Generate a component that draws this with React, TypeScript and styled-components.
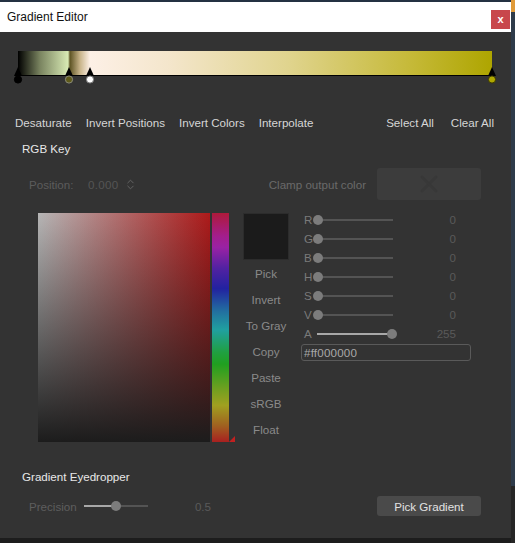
import React from "react";
import styled, { createGlobalStyle } from "styled-components";
import { ChevronsUpDown, X } from "lucide-react";

const GlobalStyle = createGlobalStyle`
  html, body {
    margin: 0;
    padding: 0;
    background: #1d1d1d;
  }
  body {
    font-family: "Liberation Sans", Arial, sans-serif;
    font-size: 11.6px;
  }
`;

const Desktop = styled.div`
  width: 515px;
  height: 543px;
  display: flex;
  background: linear-gradient(#243142 0 2px, #1d1d1d 2px);
  overflow: hidden;
`;

const Window = styled.div`
  width: 511px;
  height: 536px;
  margin-top: 2px;
  display: flex;
  flex-direction: column;
  flex-shrink: 0;
`;

const RightStrip = styled.div`
  flex: 1;
  background: linear-gradient(#e09a38 0 12px, #2e3b4a 12px 486px, #262626 486px);
`;

const TitleBar = styled.div`
  height: 30px;
  background: #ffffff;
  display: flex;
  align-items: center;
  justify-content: space-between;
  padding: 0 1px 0 7px;
`;

const Title = styled.span`
  font-size: 12px;
  color: #111;
`;

const CloseButton = styled.div`
  width: 19px;
  height: 19px;
  margin-top: 4px;
  background: #c8474c;
  color: #fff;
  font-weight: bold;
  font-size: 11px;
  display: flex;
  align-items: center;
  justify-content: center;
`;

const Body = styled.div`
  flex: 1;
  background: #333333;
  display: flex;
  flex-direction: column;
`;

const BarWrap = styled.div`
  position: relative;
  margin: 19px 0 0 18px;
  width: 474px;
  height: 25px;
`;

const Bar = styled.div`
  height: 24px;
  border-bottom: 1px solid #000;
  background: linear-gradient(
    90deg,
    #000 0px,
    #7a8460 22px,
    #d8eab4 50px,
    #5e5424 52px,
    #c8b48a 62px,
    #fdf0e6 72px,
    #f4e6cc 150px,
    #e0d48e 270px,
    #c6ba3a 390px,
    #aea500 100%
  );
`;

const Marker = styled.svg<{ $left: number }>`
  position: absolute;
  top: 15px;
  left: ${(p) => p.$left - 5}px;
  width: 10px;
  height: 18px;
  overflow: visible;
`;

const Toolbar = styled.div`
  margin-top: 38px;
  height: 16px;
  padding: 0 17px 0 15px;
  display: flex;
  align-items: center;
  justify-content: space-between;
  color: #d6d6d6;
`;

const Group = styled.div<{ $gap: number }>`
  display: flex;
  gap: ${(p) => p.$gap}px;
`;

const SectionTitle = styled.div<{ $top: number }>`
  margin-top: ${(p) => p.$top}px;
  height: 16px;
  line-height: 16px;
  padding-left: 22px;
  color: #e8e8e8;
`;

const PositionRow = styled.div`
  margin-top: 11px;
  height: 32px;
  padding: 0 30px 0 29px;
  display: flex;
  align-items: center;
  color: #5c5c5c;
`;

const RowLabel = styled.span<{ $w: number }>`
  width: ${(p) => p.$w}px;
`;

const DimValue = styled.span`
  color: #555;
  letter-spacing: 0.3px;
`;

const Spinner = styled.span`
  display: flex;
  margin-left: 5px;
  color: #6a6a6a;
`;

const ClampLabel = styled.span`
  margin-left: auto;
  color: #6a6a6a;
`;

const ClampBox = styled.div`
  margin-left: 11px;
  width: 104px;
  height: 32px;
  border-radius: 3px;
  background: #3c3c3c;
  display: flex;
  align-items: center;
  justify-content: center;
  color: #383838;
`;

const EditorRow = styled.div`
  margin-top: 13px;
  height: 229px;
  padding-left: 38px;
  display: flex;
  align-items: flex-start;
`;

const Picker = styled.div`
  width: 172px;
  height: 229px;
  background: linear-gradient(to bottom, rgba(28, 28, 28, 0) 0%, #1c1c1c 100%),
    linear-gradient(to right, #b6b6b6, #ad1a1a);
`;

const HueStrip = styled.div`
  position: relative;
  width: 17px;
  height: 229px;
  margin-left: 2px;
  background: linear-gradient(
    to bottom,
    #ae1a3a 0%,
    #a41e8c 10%,
    #9a22a4 15%,
    #5222a2 24%,
    #2222a0 33%,
    #2270a0 43%,
    #20a0a0 51%,
    #20a040 61%,
    #20a020 66%,
    #78a020 78%,
    #a0a020 84%,
    #a06020 93%,
    #a82020 100%
  );
`;

const HueCaret = styled.div`
  position: absolute;
  right: -6px;
  bottom: 0;
  width: 0;
  height: 0;
  border-left: 6px solid transparent;
  border-bottom: 6px solid #c22020;
`;

const ToolColumn = styled.div`
  margin-left: 14px;
  width: 46px;
  display: flex;
  flex-direction: column;
`;

const Swatch = styled.div`
  height: 47px;
  box-sizing: border-box;
  background: #1b1b1b;
  border: 1px solid #2c2c2c;
  margin-bottom: 1px;
`;

const ToolButton = styled.div`
  height: 26px;
  line-height: 26px;
  text-align: center;
  color: #8a8a8a;
  white-space: nowrap;
`;

const SliderColumn = styled.div`
  margin: -3px 0 0 12px;
  width: 170px;
  display: flex;
  flex-direction: column;
`;

const SliderRow = styled.div`
  height: 19px;
  display: flex;
  align-items: center;
`;

const SliderLabel = styled.span`
  width: 9px;
  padding-left: 3px;
  color: #7a7a7a;
`;

const Track = styled.div<{ $w: number }>`
  position: relative;
  width: ${(p) => p.$w}px;
  height: 10px;
  flex-shrink: 0;
  &::before {
    content: "";
    position: absolute;
    left: 5px;
    right: 5px;
    top: 4px;
    height: 2px;
    background: #545454;
  }
`;

const TrackFill = styled.div`
  position: absolute;
  left: 4px;
  top: 4px;
  height: 2px;
  background: #a8a8a8;
`;

const Knob = styled.div`
  position: absolute;
  top: 0;
  width: 10px;
  height: 10px;
  border-radius: 50%;
  background: #7c7c7c;
`;

const SliderValue = styled.span<{ $w: number }>`
  width: ${(p) => p.$w}px;
  text-align: right;
  color: #5a5a5a;
`;

const HexInput = styled.div`
  margin-top: 1px;
  height: 17px;
  box-sizing: border-box;
  border: 1px solid #5a5a5a;
  border-radius: 3px;
  padding-left: 2px;
  line-height: 15px;
  color: #a8a8a8;
  letter-spacing: 0.2px;
`;

const PrecisionRow = styled.div`
  margin-top: 11px;
  height: 20px;
  padding: 0 30px 0 29px;
  display: flex;
  align-items: center;
  color: #5e5e5e;
`;

const PickButton = styled.div`
  margin-left: auto;
  width: 104px;
  height: 20px;
  border-radius: 3px;
  background: #4a4a4a;
  color: #e2e2e2;
  display: flex;
  align-items: center;
  justify-content: center;
`;

type Stop = { left: number; fill: string; ring: string };

const stops: Stop[] = [
  { left: 0, fill: "#000", ring: "#000" },
  { left: 51, fill: "#5e5a1a", ring: "#8c8c7a" },
  { left: 72, fill: "#fff", ring: "#777" },
  { left: 474, fill: "#b0a800", ring: "#3a3800" },
];

const channels = [
  { key: "R", value: 0 },
  { key: "G", value: 0 },
  { key: "B", value: 0 },
  { key: "H", value: 0 },
  { key: "S", value: 0 },
  { key: "V", value: 0 },
];

const tools = ["Pick", "Invert", "To Gray", "Copy", "Paste", "sRGB", "Float"];

function Slider({ width, pct }: { width: number; pct: number }) {
  const travel = width - 10;
  const center = 5 + pct * travel;
  return (
    <Track $w={width}>
      {pct > 0 && <TrackFill style={{ width: center - 4 }} />}
      <Knob style={{ left: center - 5 }} />
    </Track>
  );
}

export default function App() {
  return (
    <>
      <GlobalStyle />
      <Desktop>
        <Window>
          <TitleBar>
            <Title>Gradient Editor</Title>
            <CloseButton>x</CloseButton>
          </TitleBar>
          <Body>
            <BarWrap>
              <Bar />
              {stops.map((s) => (
                <Marker key={s.left} $left={s.left} viewBox="0 0 10 18">
                  <path d="M5 1 L9 10 L1 10 Z" fill="#000" />
                  <circle cx="5" cy="13.5" r="3.6" fill={s.fill} stroke={s.ring} strokeWidth="1" />
                </Marker>
              ))}
            </BarWrap>

            <Toolbar>
              <Group $gap={14}>
                <span>Desaturate</span>
                <span>Invert Positions</span>
                <span>Invert Colors</span>
                <span>Interpolate</span>
              </Group>
              <Group $gap={17}>
                <span>Select All</span>
                <span>Clear All</span>
              </Group>
            </Toolbar>

            <SectionTitle $top={11}>RGB Key</SectionTitle>

            <PositionRow>
              <RowLabel $w={59}>Position:</RowLabel>
              <DimValue>0.000</DimValue>
              <Spinner>
                <ChevronsUpDown size={13} strokeWidth={1.6} />
              </Spinner>
              <ClampLabel>Clamp output color</ClampLabel>
              <ClampBox>
                <X size={28} strokeWidth={2.2} />
              </ClampBox>
            </PositionRow>

            <EditorRow>
              <Picker />
              <HueStrip>
                <HueCaret />
              </HueStrip>
              <ToolColumn>
                <Swatch />
                {tools.map((t) => (
                  <ToolButton key={t}>{t}</ToolButton>
                ))}
              </ToolColumn>
              <SliderColumn>
                {channels.map((c) => (
                  <SliderRow key={c.key}>
                    <SliderLabel>{c.key}</SliderLabel>
                    <Slider width={85} pct={0} />
                    <SliderValue $w={58}>{c.value}</SliderValue>
                  </SliderRow>
                ))}
                <SliderRow>
                  <SliderLabel>A</SliderLabel>
                  <Slider width={85} pct={0.99} />
                  <SliderValue $w={58}>255</SliderValue>
                </SliderRow>
                <HexInput>#ff000000</HexInput>
              </SliderColumn>
            </EditorRow>

            <SectionTitle $top={27}>Gradient Eyedropper</SectionTitle>

            <PrecisionRow>
              <RowLabel $w={51}>Precision</RowLabel>
              <Slider width={73} pct={0.49} />
              <SliderValue $w={58}>0.5</SliderValue>
              <PickButton>Pick Gradient</PickButton>
            </PrecisionRow>
          </Body>
        </Window>
        <RightStrip />
      </Desktop>
    </>
  );
}
